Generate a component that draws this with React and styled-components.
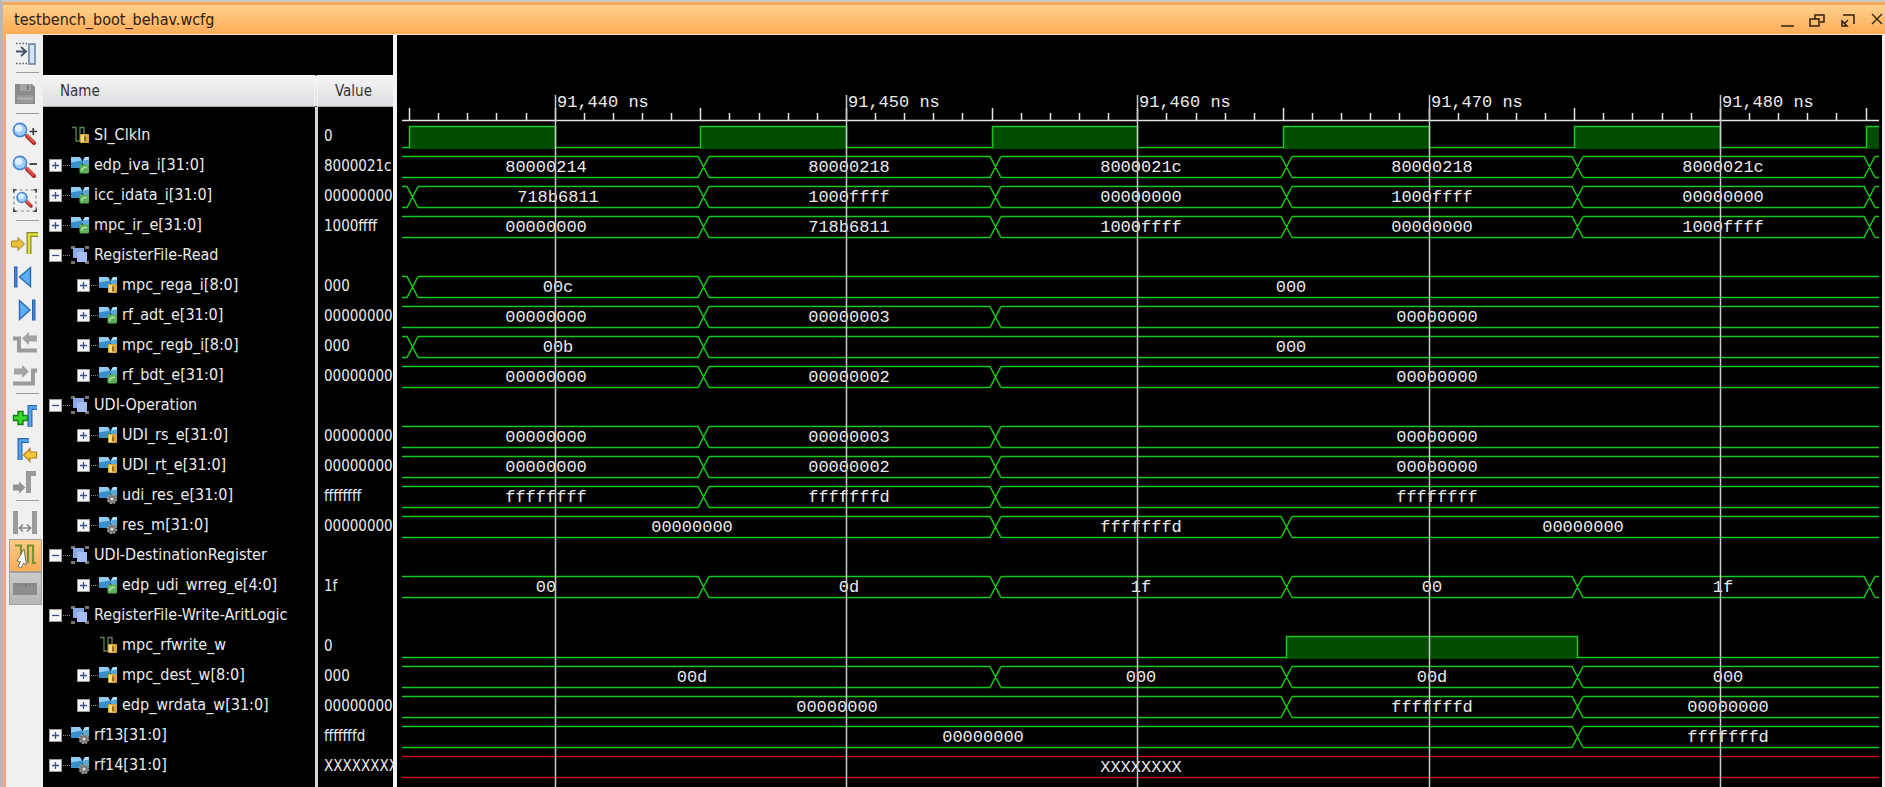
import React, { useLayoutEffect, useRef, useState } from "react";
import styled, { createGlobalStyle } from "styled-components";

const UI_FONT = `"DejaVu Sans Condensed", "DejaVu Sans", Tahoma, sans-serif`;
const MONO_FONT = `"Liberation Mono", "Courier New", monospace`;

const GlobalStyle = createGlobalStyle`
  * { box-sizing: border-box; }
  body { margin: 0; background: #000; }
`;

/* ---------- window frame ---------- */

const Window = styled.main`
  display: flex;
  flex-direction: column;
  min-height: 100vh;
  border-top: 2px solid #cdcac6;
  border-left: 3px solid #b9b6b3;
  background: #f6ad62;
  font-family: ${UI_FONT};
  font-size: 15px;
  line-height: 20px;
`;

const TitleBar = styled.header`
  display: flex;
  align-items: center;
  justify-content: space-between;
  height: 32px;
  padding-left: 11px;
  border-top: 3px solid #f0a95c;
  background: linear-gradient(#ffd18c, #ffac58);
  color: #2b2112;
`;

const Title = styled.h1`
  margin: 0;
  font-size: 16px;
  font-weight: normal;
`;

const WindowControls = styled.div`
  display: flex;
  gap: 14px;
`;

const WindowButton = styled.button`
  width: 16px;
  height: 18px;
  padding: 0;
  border: 0;
  background: none;
  svg { display: block; }
`;

const Workspace = styled.div`
  display: flex;
  flex: 1;
  margin-left: 3px;
  border-top: 1px solid #f7ead9;
  border-right: 3px solid #efefef;
  background: #000;
`;

/* ---------- toolbar ---------- */

const Toolbar = styled.nav`
  display: flex;
  flex: none;
  flex-direction: column;
  width: 37px;
  padding: 2px 1px 0 3px;
  background: #f0f0f0;
`;

const Tool = styled.button`
  width: 33px;
  height: 33px;
  padding: 0;
  border: 0;
  background: ${(p) =>
    p.$tone === "active"
      ? "linear-gradient(#ffcb85, #ffaa55)"
      : p.$tone === "pressed"
      ? "linear-gradient(#cbcbcb, #b5b5b5)"
      : "none"};
  box-shadow: ${(p) => (p.$tone ? "inset 0 0 0 1px #a3a09c" : "none")};
  svg { display: block; }
`;

const ToolSeparator = styled.hr`
  width: 23px;
  height: 1px;
  margin: 2px 0 5px 7px;
  border: 0;
  background: #9d9d9d;
`;

/* ---------- signal table ---------- */

const SignalPane = styled.section`
  display: flex;
  flex: none;
  flex-direction: column;
  width: 350px;
  padding-top: 40px;
  background: #000;
`;

const SignalTable = styled.table`
  flex: 1;
  width: 100%;
  border-collapse: separate;
  border-spacing: 0;
  table-layout: fixed;
  color: #ececec;
`;

const HeadCell = styled.th`
  width: ${(p) => p.$width};
  height: 32px;
  padding: 0 0 0 17px;
  border-top: 1px solid #fff;
  border-right: ${(p) => (p.$divided ? "4px double #f4f4f4" : "0")};
  border-bottom: 1px solid #a8a8ac;
  background: linear-gradient(#f5f5f6, #dddde1);
  color: #33333c;
  font-weight: normal;
  text-align: left;
`;

const NameCell = styled.td`
  height: ${(p) => p.$height || "30px"};
  padding: 0;
  border-right: 3px solid #d6d6d6;
  font-size: 16px;
`;

const ValueCell = styled.td`
  overflow: hidden;
  padding: 2px 0 0 6px;
  white-space: nowrap;
`;

const SignalName = styled.div`
  display: flex;
  align-items: center;
  padding-left: ${(p) => 6 + p.$level * 28}px;
  white-space: nowrap;
`;

const Expander = styled.button`
  width: 13px;
  height: 13px;
  padding: 0;
  border: 0;
  background: none;
  svg { display: block; }
`;

const ExpanderGap = styled.span`
  width: 13px;
`;

const Branch = styled.span`
  width: 7px;
  margin: 0 1px;
  border-top: 1px dotted ${(p) => (p.$hidden ? "transparent" : "#8c8c8c")};
`;

const SignalIcon = styled.svg`
  width: 18px;
  height: 18px;
  margin-right: 5px;
`;

/* ---------- waveform ---------- */

const WavePane = styled.section`
  flex: 1;
  min-width: 0;
  padding: 0 3px 0 5px;
  border-left: 4px solid #f3f3f3;
  background: #000;
`;

const WaveSvg = styled.svg`
  display: block;
  width: 100%;
  height: 100%;
  min-height: 751px;
`;

const WaveLine = styled.path`
  fill: none;
  stroke: ${(p) => (p.$unknown ? "#c41010" : "#16c916")};
  stroke-width: 1.5;
`;

const WaveFill = styled.rect`
  fill: #004d00;
`;

const WaveText = styled.text`
  fill: #ebebeb;
  font-family: ${MONO_FONT};
  font-size: 17px;
`;

const AxisLine = styled.path`
  fill: none;
  stroke: #e4e4e4;
  stroke-width: 1.5;
`;

const GridLine = styled.line`
  stroke: #c9c9c9;
  stroke-width: 1.5;
`;

/* ---------- data ---------- */

/* Bus segments are [start time in ns or null when it began off screen, value]. */
const SIGNALS = [
  { name: "SI_ClkIn", value: "0", kind: "bit", badge: "in", high: [[91435, 91440], [91445, 91450], [91455, 91460], [91465, 91470], [91475, 91480], [91485, 91490]] },
  { name: "edp_iva_i[31:0]", value: "8000021c", badge: "out", bus: [[null, "80000214"], [91445, "80000218"], [91455, "8000021c"], [91465, "80000218"], [91475, "8000021c"], [91485, ""]] },
  { name: "icc_idata_i[31:0]", value: "00000000", badge: "out", bus: [[null, ""], [91435, "718b6811"], [91445, "1000ffff"], [91455, "00000000"], [91465, "1000ffff"], [91475, "00000000"], [91485, ""]] },
  { name: "mpc_ir_e[31:0]", value: "1000ffff", badge: "out", bus: [[null, "00000000"], [91445, "718b6811"], [91455, "1000ffff"], [91465, "00000000"], [91475, "1000ffff"], [91485, ""]] },
  { name: "RegisterFile-Read", kind: "group" },
  { name: "mpc_rega_i[8:0]", level: 1, value: "000", badge: "in", bus: [[null, ""], [91435, "00c"], [91445, "000"]] },
  { name: "rf_adt_e[31:0]", level: 1, value: "00000000", badge: "out", bus: [[null, "00000000"], [91445, "00000003"], [91455, "00000000"]] },
  { name: "mpc_regb_i[8:0]", level: 1, value: "000", badge: "in", bus: [[null, ""], [91435, "00b"], [91445, "000"]] },
  { name: "rf_bdt_e[31:0]", level: 1, value: "00000000", badge: "out", bus: [[null, "00000000"], [91445, "00000002"], [91455, "00000000"]] },
  { name: "UDI-Operation", kind: "group" },
  { name: "UDI_rs_e[31:0]", level: 1, value: "00000000", badge: "in", bus: [[null, "00000000"], [91445, "00000003"], [91455, "00000000"]] },
  { name: "UDI_rt_e[31:0]", level: 1, value: "00000000", badge: "in", bus: [[null, "00000000"], [91445, "00000002"], [91455, "00000000"]] },
  { name: "udi_res_e[31:0]", level: 1, value: "ffffffff", badge: "reg", bus: [[null, "ffffffff"], [91445, "fffffffd"], [91455, "ffffffff"]] },
  { name: "res_m[31:0]", level: 1, value: "00000000", badge: "reg", bus: [[null, "00000000"], [91455, "fffffffd"], [91465, "00000000"]] },
  { name: "UDI-DestinationRegister", kind: "group" },
  { name: "edp_udi_wrreg_e[4:0]", level: 1, value: "1f", badge: "out", bus: [[null, "00"], [91445, "0d"], [91455, "1f"], [91465, "00"], [91475, "1f"], [91485, ""]] },
  { name: "RegisterFile-Write-AritLogic", kind: "group" },
  { name: "mpc_rfwrite_w", level: 1, value: "0", kind: "bit", badge: "in", high: [[91465.1, 91475.1]] },
  { name: "mpc_dest_w[8:0]", level: 1, value: "000", badge: "in", bus: [[null, "00d"], [91455, "000"], [91465, "00d"], [91475, "000"]] },
  { name: "edp_wrdata_w[31:0]", level: 1, value: "00000000", badge: "in", bus: [[null, "00000000"], [91465, "fffffffd"], [91475, "00000000"]] },
  { name: "rf13[31:0]", value: "fffffffd", badge: "reg", bus: [[null, "00000000"], [91475, "fffffffd"]] },
  { name: "rf14[31:0]", value: "XXXXXXXX", badge: "reg", unknown: true, bus: [[null, "XXXXXXXX"]] },
];

const FIRST_NS = 91435;
const PX_PER_NS = 29.13;
const xOf = (ns) => Math.round((ns - FIRST_NS) * PX_PER_NS) + 7;

const AXIS_Y = 85;
const ROW_TOP = 91;
const ROW_PITCH = 30;
const WAVE_HEIGHT = 21;

/* ---------- toolbar icons ---------- */

const Handle = ({ x1, y1, x2, y2, w = 4 }) => (
  <g strokeLinecap="round">
    <line x1={x1} y1={y1} x2={x2} y2={y2} stroke="#a8281c" strokeWidth={w} />
    <line x1={x1} y1={y1 - 0.7} x2={x2 - 0.5} y2={y2 - 1} stroke="#e8594a" strokeWidth={w / 2} />
  </g>
);

const Lens = ({ cx, cy, r }) => (
  <g>
    <circle cx={cx} cy={cy} r={r} fill="#9fd0f8" stroke="#4c86cf" strokeWidth="1.6" />
    <circle cx={cx - r * 0.2} cy={cy - r * 0.25} r={r * 0.55} fill="#dff1ff" />
  </g>
);

const Step = ({ d, fill, edge }) => (
  <g fill="none" strokeLinejoin="miter">
    <path d={d} stroke={edge} strokeWidth="5" />
    <path d={d} stroke={fill} strokeWidth="2.6" />
  </g>
);

const GREY = "#9b9b9b";

const TOOL_ART = {
  float: (
    <>
      <path d="M7 6.5H18M7 26.5H18" stroke="#5b6068" strokeWidth="1.5" strokeDasharray="1.5 1.7" />
      <path d="M7 14.5H16M12 10L17 14.5L12 19" stroke="#46536b" strokeWidth="2" fill="none" />
      <rect x="20" y="7" width="6" height="20" fill="#d3e4f5" stroke="#6c86a8" strokeWidth="1.6" />
    </>
  ),
  save: (
    <>
      <path d="M6 6H23L26 9V26H6Z" fill="#8b8b8b" />
      <rect x="11" y="6" width="11" height="7" fill="#a3a3a3" />
      <rect x="18" y="7" width="2" height="5" fill="#7e7e7e" />
      <rect x="8" y="17" width="16" height="8" fill="#999" />
      <path d="M8 20.5H24" stroke="#b9b9b9" strokeWidth="1.4" />
    </>
  ),
  zoomIn: (
    <>
      <Handle x1={18} y1={17} x2={25} y2={24} />
      <Lens cx={11} cy={11} r={6.6} />
      <path d="M20.5 12.5H28M24.25 9V16" stroke="#3b3b3b" strokeWidth="1.6" />
    </>
  ),
  zoomOut: (
    <>
      <Handle x1={18} y1={17} x2={25} y2={24} />
      <Lens cx={11} cy={11} r={6.6} />
      <path d="M20.5 12H28" stroke="#3b3b3b" strokeWidth="1.8" />
    </>
  ),
  zoomFit: (
    <>
      <rect x="5" y="5" width="22" height="21" fill="none" stroke="#8a8a8a" strokeWidth="1.2" strokeDasharray="3 2.5" />
      <path d="M4 4H8L4 8ZM28 4V8L24 4ZM4 27V23L8 27ZM28 27H24L28 23Z" fill="#4a4a4a" />
      <Handle x1={18} y1={17} x2={22} y2={21} w={3.5} />
      <Lens cx={13} cy={12.5} r={5} />
    </>
  ),
  toMarker: (
    <>
      <path d="M2.5 15H9V11.5L15.5 18L9 24.5V21H2.5Z" fill="#e9bf38" stroke="#a78628" />
      <Step d="M20 28V8.5H29" fill="#dde03c" edge="#85852e" />
    </>
  ),
  previous: (
    <>
      <rect x="5.5" y="8" width="2.5" height="20" fill="#3f85d8" stroke="#2c62ae" />
      <path d="M21.5 8.5V27.5L10.5 18Z" fill="#5aaef4" stroke="#2c69bb" strokeWidth="1.4" />
    </>
  ),
  next: (
    <>
      <rect x="23.5" y="8" width="2.5" height="20" fill="#3f85d8" stroke="#2c62ae" />
      <path d="M10.5 8.5V27.5L21 18Z" fill="#5aaef4" stroke="#2c69bb" strokeWidth="1.4" />
    </>
  ),
  previousEdge: (
    <>
      <path d="M4 13.5H10V25.5H28" fill="none" stroke={GREY} strokeWidth="4" />
      <path d="M28 10.5H20V7L13 13.5L20 20V16.5H28Z" fill="#a4a4a4" />
    </>
  ),
  nextEdge: (
    <>
      <path d="M4 25.5H24V12.5H28" fill="none" stroke={GREY} strokeWidth="4" />
      <path d="M5 10.5H13V7L20 13.5L13 20V16.5H5Z" fill="#a4a4a4" />
    </>
  ),
  addMarker: (
    <>
      <Step d="M21 28V8.5H28" fill="#58a4ec" edge="#2d68ac" />
      <path d="M9 12.5H14V16.5H18.5V21.5H14V25.5H9V21.5H4.5V16.5H9Z" fill="#38d82c" stroke="#15801a" strokeWidth="1.4" />
    </>
  ),
  previousMarker: (
    <>
      <Step d="M11 28V8.5H20" fill="#58a4ec" edge="#2d68ac" />
      <path d="M27.5 20H21V16.5L14.5 23L21 29.5V26H27.5Z" fill="#f3c736" stroke="#b38425" strokeWidth="1.2" />
    </>
  ),
  nextMarker: (
    <>
      <path d="M19.5 28V8.5H27" fill="none" stroke={GREY} strokeWidth="5" />
      <path d="M4 19.5H10V16.5L16.5 22.5L10 28.5V25.5H4Z" fill="#929292" />
    </>
  ),
  span: (
    <>
      <rect x="4" y="5" width="5" height="23" fill={GREY} />
      <rect x="23" y="5" width="5" height="23" fill={GREY} />
      <path d="M11 22H21M14 18.5L10.5 22L14 25.5M18 18.5L21.5 22L18 25.5" fill="none" stroke="#888" strokeWidth="1.7" />
    </>
  ),
  snap: (
    <>
      <path d="M6 6.5H12V24M19 24V6.500H24V24H27" fill="none" stroke="#779434" strokeWidth="2.2" />
      <path d="M15 10L8 22L11.5 22.5L9 27.5L12 29L14.5 24L17.5 26Z" fill="#fff" stroke="#76716b" />
    </>
  ),
  ruler: (
    <>
      <rect x="4" y="11" width="24" height="12" fill="#8d8d8d" />
      <path d="M8.5 11V14M12.5 11V14M16.5 11V15M20.5 11V14M24.5 11V14" stroke="#777" strokeWidth="1.3" />
    </>
  ),
};

const TOOL_GROUPS = [
  [["float", "Float"]],
  [["save", "Save waveform"]],
  [["zoomIn", "Zoom in"], ["zoomOut", "Zoom out"], ["zoomFit", "Zoom fit"]],
  [
    ["toMarker", "Go to cursor"],
    ["previous", "Go to start"],
    ["next", "Go to end"],
    ["previousEdge", "Previous transition"],
    ["nextEdge", "Next transition"],
  ],
  [["addMarker", "Add marker"], ["previousMarker", "Previous marker"], ["nextMarker", "Next marker"]],
  [["span", "Swap cursors"], ["snap", "Snap to transition", "active"], ["ruler", "Floating ruler", "pressed"]],
];

/* ---------- signal icons ---------- */

function Badge({ type }) {
  if (type === "out") {
    return (
      <g>
        <rect x="8.5" y="8.5" width="9.500" height="9" rx="1.5" fill="#5fae58" />
        <path d="M11 15V13L13 11.500H16" stroke="#b4e6aa" strokeWidth="1.5" fill="none" />
      </g>
    );
  }
  if (type === "reg") {
    return (
      <g>
        <circle cx="13" cy="13" r="4.5" fill="#777" stroke="#a5a5a5" strokeDasharray="2 1.5" strokeWidth="1.5" />
        <circle cx="13" cy="13" r="1.6" fill="#ddd" />
      </g>
    );
  }
  return (
    <g>
      <rect x="9" y="8" width="9" height="9" rx="1" fill="#dba638" />
      <rect x="10" y="9" width="3" height="7" fill="#f5d98a" />
      <path d="M14 10.5V15" stroke="#7d5a18" strokeWidth="1.5" />
    </g>
  );
}

function SignalGlyph({ kind, badge }) {
  if (kind === "group") {
    return (
      <SignalIcon viewBox="0 0 18 18" aria-hidden="true">
        <path d="M0 0H4V3H0ZM14 0H18V3H14ZM0 15H4V18H0ZM14 15H18V18H14Z" fill="#777" />
        <rect x="2" y="2" width="11" height="10" fill="#88a8e4" />
        <rect x="6" y="6" width="10" height="10" fill="#a4bdf0" />
      </SignalIcon>
    );
  }
  if (kind === "bit") {
    return (
      <SignalIcon viewBox="0 0 18 18" aria-hidden="true">
        <path d="M1 1.5H5V15H9V1.5H13V8" fill="none" stroke="#5f8457" strokeWidth="1.3" />
        <Badge type={badge} />
      </SignalIcon>
    );
  }
  return (
    <SignalIcon viewBox="0 0 18 18" aria-hidden="true">
      <path d="M0 1H9L12 6L9 12H0Z" fill="#388fcb" />
      <path d="M0 1H9L11 4.5L0 6.5Z" fill="#91cdf2" />
      <path d="M18 1H14L11 6L13 10H18Z" fill="#55a9dd" />
      <path d="M18 1H14L12 4.5L18 3.5Z" fill="#b3e0f8" />
      <Badge type={badge} />
    </SignalIcon>
  );
}

function SignalRow({ signal }) {
  const { name, value, kind = "bus", level = 0, badge } = signal;
  const open = kind === "group";
  return (
    <tr>
      <NameCell>
        <SignalName $level={level}>
          {kind === "bit" ? (
            <ExpanderGap />
          ) : (
            <Expander aria-label={`${open ? "Collapse" : "Expand"} ${name}`} aria-expanded={open}>
              <svg width="13" height="13" viewBox="0 0 13 13">
                <rect x="0.5" y="0.5" width="12" height="12" fill="#f6f6f8" stroke="#9a9a9a" />
                <path d={open ? "M3 6.5H10" : "M3 6.5H10M6.5 3V10"} stroke="#3a4f8f" strokeWidth="1.3" />
              </svg>
            </Expander>
          )}
          <Branch $hidden={kind === "bit"} />
          <SignalGlyph kind={kind} badge={badge} />
          {name}
        </SignalName>
      </NameCell>
      <ValueCell>{value}</ValueCell>
    </tr>
  );
}

/* ---------- waveform drawing ---------- */

function BitWave({ high, top, width }) {
  const hi = top + 0.5;
  const lo = top + WAVE_HEIGHT + 0.5;
  const pulses = high
    .map(([from, to]) => [xOf(from), Math.min(xOf(to), width)])
    .filter(([from]) => from < width);
  let d = `M0 ${lo}`;
  pulses.forEach(([from, to]) => {
    d += `H${from + 0.5}V${hi}H${to + 0.5}`;
    if (to < width) d += `V${lo}`;
  });
  const last = pulses[pulses.length - 1];
  if (!last || last[1] < width) d += `H${width}`;
  return (
    <g>
      {pulses.map(([from, to]) => (
        <WaveFill key={from} x={from} y={top} width={to - from} height={WAVE_HEIGHT + 2} />
      ))}
      <WaveLine d={d} />
    </g>
  );
}

function BusWave({ bus, unknown, top, width }) {
  const hi = top + 0.5;
  const lo = top + WAVE_HEIGHT + 0.5;
  const edges = bus
    .map(([start]) => (start === null ? null : xOf(start) + 3))
    .filter((x) => x !== null && x + 6 < width);
  let a = `M0 ${hi}`;
  let b = `M0 ${lo}`;
  edges.forEach((x) => {
    a += `H${x - 5}L${x + 6} ${lo}M${x + 6} ${hi}`;
    b += `H${x - 5}L${x + 6} ${hi}M${x + 6} ${lo}`;
  });
  return (
    <g>
      <WaveLine $unknown={unknown} d={`${a}H${width}${b}H${width}`} />
      {bus.map(([start, label], i) => {
        const next = bus[i + 1];
        const from = start === null ? (next ? -14 : 0) : xOf(start) + 3;
        const to = next ? Math.min(xOf(next[0]) + 3, width) : width;
        if (!label || from >= width) return null;
        return (
          <WaveText key={i} x={Math.round((from + to) / 2)} y={top + 16} textAnchor="middle">
            {label}
          </WaveText>
        );
      })}
    </g>
  );
}

function Waveform() {
  const ref = useRef(null);
  const [width, setWidth] = useState(1477);

  useLayoutEffect(() => {
    const measure = () => setWidth(Math.floor(ref.current.getBoundingClientRect().width));
    measure();
    const observer = new ResizeObserver(measure);
    observer.observe(ref.current);
    return () => observer.disconnect();
  }, []);

  const ticks = [];
  for (let ns = FIRST_NS; xOf(ns) < width; ns += 1) ticks.push(ns);
  const majors = ticks.filter((ns) => ns % 10 === 0);

  let axis = `M0 ${AXIS_Y + 0.5}H${width}`;
  ticks.forEach((ns) => {
    axis += `M${xOf(ns) + 0.5} ${AXIS_Y}V${ns % 5 === 0 ? AXIS_Y - 12 : AXIS_Y - 7}`;
  });

  return (
    <WaveSvg ref={ref} role="img" aria-label="Signal waveforms">
      <AxisLine d={axis} />
      {SIGNALS.map((signal, i) => {
        const top = ROW_TOP + i * ROW_PITCH;
        if (signal.high) return <BitWave key={signal.name} high={signal.high} top={top} width={width} />;
        if (signal.bus)
          return <BusWave key={signal.name} bus={signal.bus} unknown={signal.unknown} top={top} width={width} />;
        return null;
      })}
      {majors.map((ns) => (
        <g key={ns}>
          <GridLine x1={xOf(ns) + 0.5} x2={xOf(ns) + 0.5} y1="60" y2="100%" />
          <WaveText x={xOf(ns) + 2} y="72">
            {`${ns.toLocaleString("en-US")} ns`}
          </WaveText>
        </g>
      ))}
    </WaveSvg>
  );
}

/* ---------- page ---------- */

const CONTROLS = [
  ["Minimize", <path key="m" d="M2 15H15" />],
  ["Restore", <path key="r" d="M6 8V4H15V11H11M1 8H10V15H1Z" />],
  ["Pop out", <path key="p" d="M4 4H15V13M9 9L5 13M3 10L8 15H3Z" />],
  ["Close", <path key="c" d="M3 3L13 13M13 3L3 13" strokeWidth="1.3" />],
];

export default function App() {
  return (
    <>
      <GlobalStyle />
      <Window>
        <TitleBar>
          <Title>testbench_boot_behav.wcfg</Title>
          <WindowControls>
            {CONTROLS.map(([label, art]) => (
              <WindowButton key={label} aria-label={label}>
                <svg width="16" height="18" viewBox="0 0 16 18" fill="none" stroke="#2e2010" strokeWidth="1.5">
                  {art}
                </svg>
              </WindowButton>
            ))}
          </WindowControls>
        </TitleBar>
        <Workspace>
          <Toolbar aria-label="Waveform tools">
            {TOOL_GROUPS.map((group, i) => (
              <React.Fragment key={i}>
                {i > 0 && <ToolSeparator />}
                {group.map(([id, label, tone]) => (
                  <Tool key={id} $tone={tone} aria-label={label}>
                    <svg width="33" height="33" viewBox="0 0 33 33" fill="none">
                      {TOOL_ART[id]}
                    </svg>
                  </Tool>
                ))}
              </React.Fragment>
            ))}
          </Toolbar>
          <SignalPane>
            <SignalTable>
              <thead>
                <tr>
                  <HeadCell $divided>Name</HeadCell>
                  <HeadCell $width="75px">Value</HeadCell>
                </tr>
              </thead>
              <tbody>
                <tr aria-hidden="true">
                  <NameCell $height="13px" />
                  <td />
                </tr>
                {SIGNALS.map((signal) => (
                  <SignalRow key={signal.name} signal={signal} />
                ))}
                <tr aria-hidden="true">
                  <NameCell $height="auto" />
                  <td />
                </tr>
              </tbody>
            </SignalTable>
          </SignalPane>
          <WavePane>
            <Waveform />
          </WavePane>
        </Workspace>
      </Window>
    </>
  );
}
